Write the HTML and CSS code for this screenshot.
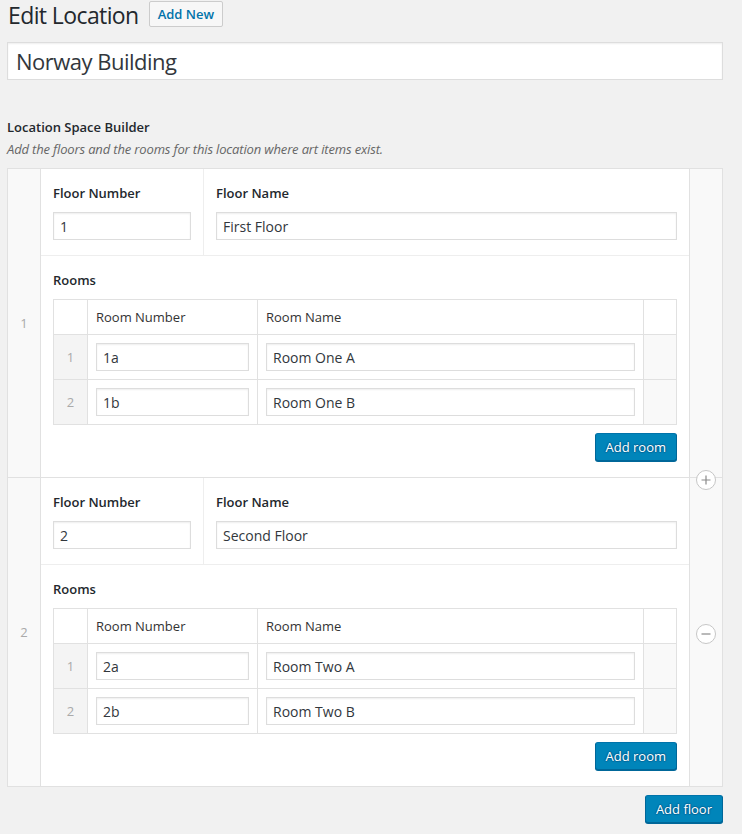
FILE: index.html
```html
<!DOCTYPE html>
<html lang="en">
<head>
<meta charset="utf-8">
<title>Edit Location</title>
<link rel="stylesheet" href="styles.css">
</head>
<body>
<div class="wrap">
  <div class="heading">
    <h1>Edit Location</h1>
    <a class="add-new" href="#">Add New</a>
  </div>
  <input class="title-input" type="text" value="Norway Building">

  <div class="field">
    <div class="field-label">Location Space Builder</div>
    <p class="desc">Add the floors and the rooms for this location where art items exist.</p>

    <div class="repeater">
      <div class="row">
        <div class="handle order">1</div>
        <div class="fields">
          <div class="subrow">
            <div class="cell">
              <label class="lbl">Floor Number</label>
              <input class="text-input" type="text" value="1">
            </div>
            <div class="cell">
              <label class="lbl">Floor Name</label>
              <input class="text-input" type="text" value="First Floor">
            </div>
          </div>
          <div class="rooms">
            <label class="lbl">Rooms</label>
            <div class="rtable">
              <div class="rrow head">
                <div class="rc num"></div>
                <div class="rc">Room Number</div>
                <div class="rc">Room Name</div>
                <div class="rc end"></div>
              </div>
              <div class="rrow">
                <div class="rc num">1</div>
                <div class="rc"><input class="text-input" type="text" value="1a"></div>
                <div class="rc"><input class="text-input" type="text" value="Room One A"></div>
                <div class="rc end"></div>
              </div>
              <div class="rrow">
                <div class="rc num">2</div>
                <div class="rc"><input class="text-input" type="text" value="1b"></div>
                <div class="rc"><input class="text-input" type="text" value="Room One B"></div>
                <div class="rc end"></div>
              </div>
            </div>
            <div class="actions"><button class="btn-primary" type="button">Add room</button></div>
          </div>
        </div>
        <div class="handle remove"></div>
      </div>

      <div class="row">
        <div class="handle order">2</div>
        <div class="fields">
          <div class="subrow">
            <div class="cell">
              <label class="lbl">Floor Number</label>
              <input class="text-input" type="text" value="2">
            </div>
            <div class="cell">
              <label class="lbl">Floor Name</label>
              <input class="text-input" type="text" value="Second Floor">
            </div>
          </div>
          <div class="rooms">
            <label class="lbl">Rooms</label>
            <div class="rtable">
              <div class="rrow head">
                <div class="rc num"></div>
                <div class="rc">Room Number</div>
                <div class="rc">Room Name</div>
                <div class="rc end"></div>
              </div>
              <div class="rrow">
                <div class="rc num">1</div>
                <div class="rc"><input class="text-input" type="text" value="2a"></div>
                <div class="rc"><input class="text-input" type="text" value="Room Two A"></div>
                <div class="rc end"></div>
              </div>
              <div class="rrow">
                <div class="rc num">2</div>
                <div class="rc"><input class="text-input" type="text" value="2b"></div>
                <div class="rc"><input class="text-input" type="text" value="Room Two B"></div>
                <div class="rc end"></div>
              </div>
            </div>
            <div class="actions"><button class="btn-primary" type="button">Add room</button></div>
          </div>
        </div>
        <div class="handle remove">
          <span class="row-icon icon-plus">
            <svg width="20" height="20" viewBox="0 0 20 20"><circle cx="10" cy="10" r="9.5" fill="#fff" stroke="#c6c6c6"/><path d="M5.5 10h9M10 5.5v9" stroke="#8a8a8a" stroke-width="1.2" fill="none"/></svg>
          </span>
          <span class="row-icon icon-minus">
            <svg width="20" height="20" viewBox="0 0 20 20"><circle cx="10" cy="10" r="9.5" fill="#fff" stroke="#c6c6c6"/><path d="M5.5 10h9" stroke="#8a8a8a" stroke-width="1.2" fill="none"/></svg>
          </span>
        </div>
      </div>
    </div>

    <div class="actions outer-actions"><button class="btn-primary" type="button">Add floor</button></div>
  </div>
</div>
</body>
</html>
```

FILE: styles.css
```css
html, body {
  margin: 0;
  background: #f1f1f1;
}

body {
  font-family: "Open Sans", "Noto Sans", sans-serif;
  font-size: 13px;
  color: #444;
}

.wrap {
  padding: 0 19px 20px 7px;
}

.heading {
  display: flex;
  align-items: center;
  gap: 10px;
}

h1 {
  margin: 0;
  padding-left: 1px;
  font-size: 23px;
  font-weight: 400;
  line-height: 31px;
  letter-spacing: -0.6px;
  color: #23282d;
}

.add-new {
  display: inline-block;
  box-sizing: border-box;
  height: 26px;
  margin-top: -3px;
  padding: 0 8px;
  border: 1px solid #ccc;
  border-radius: 2px;
  background: #f7f7f7;
  color: #0073aa;
  font-size: 13px;
  font-weight: 600;
  line-height: 24px;
  text-decoration: none;
}

.title-input {
  display: block;
  box-sizing: border-box;
  width: 100%;
  height: 38px;
  margin: 11px 0 0;
  padding: 0 8px;
  border: 1px solid #ddd;
  box-shadow: inset 0 1px 2px rgba(0, 0, 0, 0.07);
  background: #fff;
  color: #32373c;
  font-family: inherit;
  font-size: 22px;
  letter-spacing: -0.5px;
  outline: none;
}

.field {
  margin-top: 38px;
}

.field-label {
  font-weight: 600;
  color: #23282d;
  line-height: 18px;
}

.desc {
  margin: 4px 0 0;
  font-style: italic;
  color: #666;
  line-height: 18px;
  letter-spacing: -0.15px;
}

.repeater {
  margin-top: 10px;
  border: 1px solid #e1e1e1;
  background: #fff;
}

.row {
  display: flex;
}

.row + .row {
  border-top: 1px solid #e1e1e1;
}

.handle {
  flex: none;
  width: 32px;
  display: flex;
  align-items: center;
  justify-content: center;
  background: #f9f9f9;
  color: #aaa;
}

.handle.order {
  border-right: 1px solid #e1e1e1;
}

.handle.remove {
  position: relative;
  border-left: 1px solid #e1e1e1;
}

.row-icon {
  position: absolute;
  left: 6px;
  width: 20px;
  height: 20px;
  line-height: 0;
}

.row-icon svg {
  display: block;
}

.icon-plus {
  top: -8px;
}

.icon-minus {
  top: 50%;
  margin-top: -8px;
}

.fields {
  flex: 1;
  min-width: 0;
}

.subrow {
  display: grid;
  grid-template-columns: 25% 75%;
  border-bottom: 1px solid #eee;
}

.cell {
  padding: 15px 12px;
}

.cell + .cell {
  border-left: 1px solid #eee;
}

.lbl {
  display: block;
  margin-bottom: 10px;
  font-weight: 600;
  color: #23282d;
  line-height: 18px;
}

.text-input {
  display: block;
  box-sizing: border-box;
  width: 100%;
  height: 28px;
  margin: 0;
  padding: 0 6px;
  border: 1px solid #ddd;
  box-shadow: inset 0 1px 2px rgba(0, 0, 0, 0.07);
  background: #fff;
  color: #32373c;
  font-family: inherit;
  font-size: 14px;
  outline: none;
}

.rooms {
  padding: 15px 12px;
}

.rtable {
  border: 1px solid #e1e1e1;
}

.rrow {
  display: grid;
  grid-template-columns: 33px 170px 1fr 33px;
}

.rrow + .rrow {
  border-top: 1px solid #e1e1e1;
}

.rc {
  padding: 8px;
  line-height: 18px;
}

.rc + .rc {
  border-left: 1px solid #e1e1e1;
}

.head .rc {
  color: #333;
}

.rc.num {
  padding: 8px 0;
  display: flex;
  align-items: center;
  justify-content: center;
  color: #aaa;
}

.rrow:not(.head) .rc.num {
  background: #f4f4f4;
}

.rrow:not(.head) .rc.end {
  background: #f9f9f9;
}

.actions {
  display: flex;
  justify-content: flex-end;
  margin-top: 8px;
}

.btn-primary {
  box-sizing: border-box;
  height: 28px;
  margin: 0 0 1px;
  padding: 0 10px 1px;
  border: 1px solid #0073aa;
  border-color: #0073aa #006799 #006799;
  border-radius: 3px;
  background: #0085ba;
  box-shadow: 0 1px 0 #006799;
  color: #fff;
  font-family: inherit;
  font-size: 13px;
  line-height: 26px;
  text-shadow: 0 -1px 1px #006799, 1px 0 1px #006799, 0 1px 1px #006799, -1px 0 1px #006799;
  cursor: pointer;
}
```
